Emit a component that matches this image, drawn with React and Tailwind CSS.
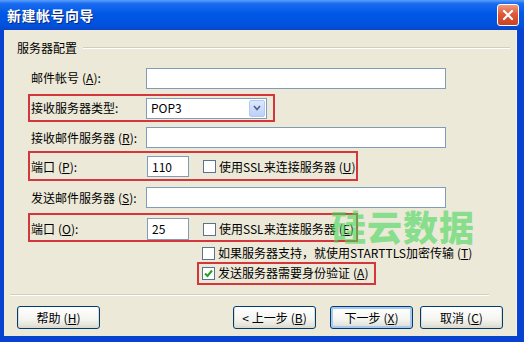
import React from 'react';

function Key({ k }) {
  return (
    <span className="ml-[3px]">
      (<u>{k}</u>)
    </span>
  );
}

function TextBox({ className = '', value = '' }) {
  return (
    <div className={`h-[21px] bg-white border border-[#7f9db9] flex items-center px-[4px] text-[12px] text-black ${className}`}>
      {value}
    </div>
  );
}

function CheckBox({ checked }) {
  return (
    <div className="w-[13px] h-[13px] bg-white border border-[#5a7390] flex items-center justify-center shrink-0">
      {checked && (
        <svg width="9" height="9" viewBox="0 0 9 9">
          <path d="M1 4.5 L3.5 7 L8 1.5" fill="none" stroke="#21a121" strokeWidth="2" />
        </svg>
      )}
    </div>
  );
}

function RedBox({ className }) {
  return <div className={`absolute border-2 border-[#d4363c] pointer-events-none ${className}`} />;
}

function XpButton({ children, primary }) {
  return (
    <button
      className={`h-[23px] w-[83px] rounded-[3px] border border-[#003c74] bg-[linear-gradient(180deg,#ffffff_0%,#f4f4f0_60%,#dcdcd2_100%)] text-[12px] text-black flex items-center justify-center ${primary ? 'shadow-[inset_0_0_0_2px_#a8c8f0]' : 'shadow-[inset_0_-1px_0_1px_#e0dccd]'}`}
    >
      {children}
    </button>
  );
}

export default function App() {
  return (
    <div className="w-[524px] h-[342px] overflow-hidden bg-[#0842d0] flex flex-col font-['Noto_Sans_CJK_SC',sans-serif] text-[12px] text-black">
      {/* Title bar */}
      <div className="h-[30px] shrink-0 flex items-center justify-between pl-[7px] pr-[5px] bg-[linear-gradient(180deg,#5aa0fb_0%,#1a6cf0_12%,#0058e6_45%,#0052dd_85%,#0a44c8_100%)]">
        <span className="text-white font-bold text-[14px] tracking-[0.5px] [text-shadow:1px_1px_0_#0a2a80]">新建帐号向导</span>
        <div className="w-[22px] h-[22px] rounded-[3px] border border-white bg-[linear-gradient(180deg,#f09a7c_0%,#e0583a_45%,#c94224_100%)] flex items-center justify-center">
          <svg width="12" height="12" viewBox="0 0 12 12">
            <path d="M2 2 L10 10 M10 2 L2 10" stroke="white" strokeWidth="2.2" strokeLinecap="round" />
          </svg>
        </div>
      </div>

      {/* Body */}
      <div className="relative flex-1 ml-[4px] mr-[7px] mb-[6px] bg-[#ece9d8] border-r border-[#f6f4ec] flex flex-col pt-[10px]">
        {/* Group heading */}
        <div className="h-[16px] flex items-center gap-[6px] pl-[13px] pr-[6px]">
          <span className="leading-none">服务器配置</span>
          <div className="flex-1 h-[2px] border-t border-[#d0d0bf] border-b border-b-white" />
        </div>

        {/* Form */}
        <div className="ml-[27px] mt-[7px] flex flex-col">
          <div className="h-[30px] flex items-center">
            <span className="w-[115px]">邮件帐号<Key k="A" />:</span>
            <TextBox className="w-[300px]" />
          </div>

          <div className="relative h-[30px] flex items-center">
            <RedBox className="left-[-3px] top-[1px] w-[247px] h-[28px]" />
            <span className="w-[115px]">接收服务器类型:</span>
            <div className="w-[121px] h-[21px] bg-white border border-[#7f9db9] flex items-center justify-between pl-[4px] pr-[1px]">
              <span>POP3</span>
              <div className="w-[16px] h-[17px] rounded-[2px] bg-[linear-gradient(180deg,#dce8fd_0%,#bcd0f8_100%)] border border-[#b3c8f5] flex items-center justify-center">
                <svg width="8" height="6" viewBox="0 0 8 6">
                  <path d="M1 1 L4 4.5 L7 1" fill="none" stroke="#4d6185" strokeWidth="1.6" />
                </svg>
              </div>
            </div>
          </div>

          <div className="h-[29px] flex items-center">
            <span className="w-[115px]">接收邮件服务器<Key k="R" />:</span>
            <TextBox className="w-[300px]" />
          </div>

          <div className="relative h-[29px] flex items-center">
            <RedBox className="left-[-3px] top-[-1px] w-[330px] h-[30px]" />
            <span className="w-[116px]">端口<Key k="P" />:</span>
            <TextBox className="w-[42px]" value="110" />
            <div className="ml-[14px] flex items-center gap-[3px]">
              <CheckBox />
              <span>使用SSL来连接服务器<Key k="U" /></span>
            </div>
          </div>

          <div className="h-[33px] flex items-center">
            <span className="w-[115px]">发送邮件服务器<Key k="S" />:</span>
            <TextBox className="w-[300px]" />
          </div>

          <div className="relative h-[30px] flex items-center">
            <RedBox className="left-[-3px] top-[-1px] w-[330px] h-[29px]" />
            <span className="w-[116px]">端口<Key k="O" />:</span>
            <TextBox className="w-[42px] h-[22px]" value="25" />
            <div className="ml-[14px] flex items-center gap-[3px]">
              <CheckBox />
              <span>使用SSL来连接服务器<Key k="E" /></span>
            </div>
          </div>

          <div className="h-[18px] flex items-center pl-[171px] gap-[3px]">
            <CheckBox />
            <span>如果服务器支持，就使用STARTTLS加密传输<Key k="T" /></span>
          </div>

          <div className="relative h-[22px] flex items-center pl-[171px] gap-[3px]">
            <RedBox className="left-[166px] top-[0px] w-[179px] h-[23px]" />
            <CheckBox checked />
            <span>发送服务器需要身份验证<Key k="A" /></span>
          </div>
        </div>

        {/* Footer separator */}
        <div className="ml-[6px] w-[479px] mt-[10px] h-[2px] border-t border-[#d0d0bf] border-b border-b-white" />

        {/* Buttons */}
        <div className="mt-[10px] flex items-center pl-[13px]">
          <XpButton>帮助<Key k="H" /></XpButton>
          <div className="ml-[133px]">
            <XpButton>&lt; 上一步<Key k="B" /></XpButton>
          </div>
          <div className="ml-[14px]">
            <XpButton primary>下一步<Key k="X" /></XpButton>
          </div>
          <div className="ml-[7px]">
            <XpButton>取消<Key k="C" /></XpButton>
          </div>
        </div>

        {/* Watermark */}
        <div className="absolute left-[327px] top-[178px] text-[35px] font-black leading-none tracking-[1px] text-[#45d85a]/60 pointer-events-none">
          硅云数据
        </div>
      </div>
    </div>
  );
}
